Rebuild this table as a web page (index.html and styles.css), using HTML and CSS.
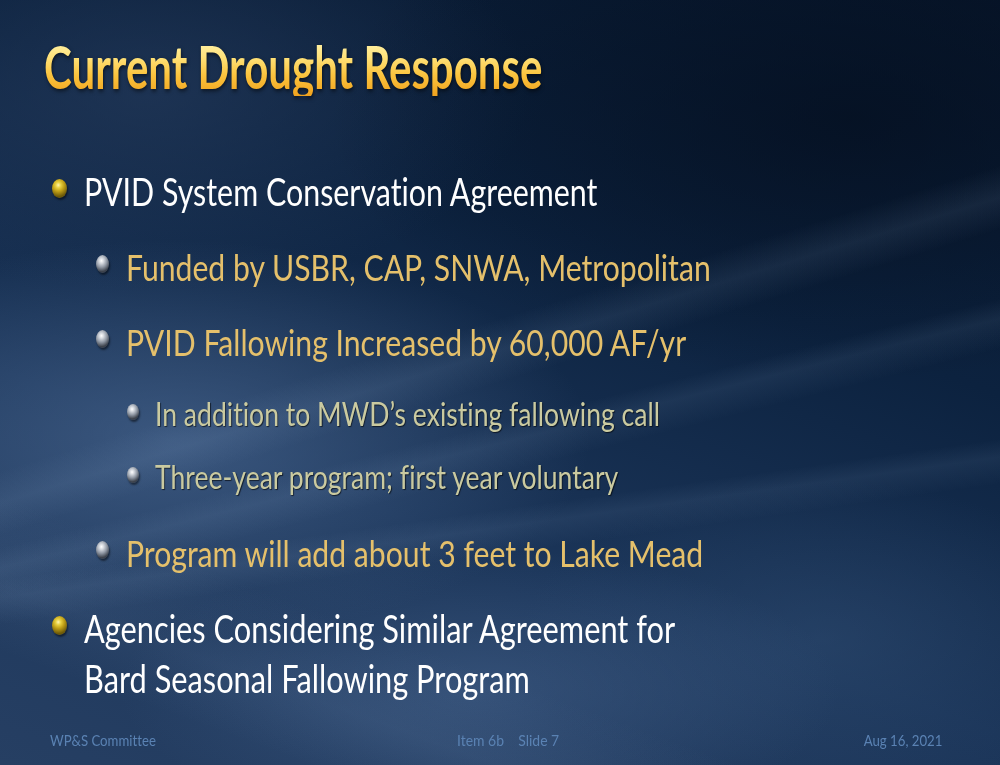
FILE: index.html
```html
<!DOCTYPE html>
<html lang="en">
<head>
<meta charset="utf-8">
<title>Current Drought Response</title>
<link rel="stylesheet" href="styles.css">
</head>
<body>
<div class="slide">
  <div class="bg-streaks"></div>
  <h1 class="title"><span class="t">Current Drought Response</span></h1>
  <ul class="list">
    <li class="item lvl1 g-a"><span class="dot gold"></span><span class="t">PVID System Conservation Agreement</span></li>
    <li class="item lvl2 g-b"><span class="dot silver"></span><span class="t">Funded by USBR, CAP, SNWA, Metropolitan</span></li>
    <li class="item lvl2 g-c"><span class="dot silver"></span><span class="t">PVID Fallowing Increased by 60,000 AF/yr</span></li>
    <li class="item lvl3 g-d"><span class="dot silver"></span><span class="t">In addition to MWD’s existing fallowing call</span></li>
    <li class="item lvl3 g-e"><span class="dot silver"></span><span class="t">Three-year program; first year voluntary</span></li>
    <li class="item lvl2 g-f"><span class="dot silver"></span><span class="t">Program will add about 3 feet to Lake Mead</span></li>
    <li class="item lvl1 wrap g-g"><span class="dot gold"></span><span class="t">Agencies Considering Similar Agreement for<br>Bard Seasonal Fallowing Program</span></li>
  </ul>
  <footer class="footer">
    <span class="f-left"><span class="t">WP&amp;S Committee</span></span>
    <span class="f-mid"><span class="t">Item 6b&nbsp;&nbsp;&nbsp;&nbsp;Slide 7</span></span>
    <span class="f-right"><span class="t">Aug 16, 2021</span></span>
  </footer>
</div>
</body>
</html>
```

FILE: styles.css
```css
html, body {
  margin: 0;
  padding: 0;
  background: #0c1e36;
}

.slide {
  position: relative;
  width: 1000px;
  height: 765px;
  overflow: hidden;
  display: flex;
  flex-direction: column;
  font-family: "Lato", "Open Sans", sans-serif;
  font-variant-ligatures: none;
  background:
    radial-gradient(ellipse 420px 200px at 170px 440px, rgba(80,110,152,0.6), rgba(80,110,152,0) 100%),
    radial-gradient(ellipse 360px 140px at 480px 690px, rgba(70,100,142,0.55), rgba(70,100,142,0) 100%),
    radial-gradient(ellipse 300px 160px at 820px 640px, rgba(50,80,118,0.45), rgba(50,80,118,0) 100%),
    radial-gradient(ellipse 520px 260px at 850px 120px, rgba(4,14,30,0.7), rgba(4,14,30,0) 100%),
    radial-gradient(ellipse 380px 200px at 150px 90px, rgba(40,62,96,0.6), rgba(40,62,96,0) 100%),
    linear-gradient(200deg, #07162b 0%, #0c223f 35%, #1b3559 65%, #263f63 100%);
}

.bg-streaks {
  position: absolute;
  inset: 0;
  pointer-events: none;
  background:
    linear-gradient(163deg, rgba(255,255,255,0) 44%, rgba(150,180,215,0.10) 47%, rgba(255,255,255,0) 50%),
    linear-gradient(166deg, rgba(255,255,255,0) 54%, rgba(150,180,215,0.09) 56%, rgba(255,255,255,0) 59%),
    linear-gradient(172deg, rgba(255,255,255,0) 64%, rgba(160,190,225,0.08) 66%, rgba(255,255,255,0) 69%),
    linear-gradient(20deg, rgba(255,255,255,0) 10%, rgba(140,170,210,0.08) 16%, rgba(255,255,255,0) 24%);
}

.t {
  display: inline-block;
  white-space: nowrap;
  transform-origin: 0 50%;
}

.title {
  position: relative;
  margin: 0;
  padding: 36px 0 0 44px;
  font-size: 60px;
  line-height: 60px;
  font-weight: 700;
}

.title .t {
  transform: scaleX(0.70);
  background: linear-gradient(180deg, #fff7b8 0%, #ffe27a 35%, #fbc43e 65%, #f0a21e 100%);
  -webkit-background-clip: text;
  background-clip: text;
  color: transparent;
  filter: drop-shadow(1px 2px 2px rgba(0,0,0,0.55));
}

.list {
  position: relative;
  list-style: none;
  margin: 0;
  padding: 0;
}

.item {
  display: flex;
  align-items: flex-start;
}

.lvl1 {
  padding-left: 52px;
  font-size: 38px;
  line-height: 40px;
  color: #ffffff;
}

.lvl1 .t { transform: scaleX(0.80); }

.lvl1.wrap {
  line-height: 50px;
}

.lvl1.wrap .t { transform: scaleX(0.81); }

.lvl2 {
  padding-left: 96px;
  font-size: 37px;
  line-height: 40px;
  color: #e5c06b;
}

.lvl2 .t { transform: scaleX(0.815); }

.lvl3 {
  padding-left: 127px;
  font-size: 32px;
  line-height: 36px;
  color: #cacaa0;
  text-shadow: 1px 1px 1px rgba(0,0,0,0.6);
}

.lvl3 .t { transform: scaleX(0.83); }

.g-a { margin-top: 75px; }
.g-b { margin-top: 36px; }
.g-c { margin-top: 35px; }
.g-d { margin-top: 34px; }
.g-e { margin-top: 27px; }
.g-f { margin-top: 38px; }
.g-g { margin-top: 30px; }

.dot {
  flex: none;
  border-radius: 50%;
  box-shadow: 1px 2px 2px rgba(0,0,0,0.5);
}

.lvl1 .dot {
  width: 15px;
  height: 19px;
  margin: 8px 17px 0 0;
}

.lvl1.wrap .dot {
  margin-top: 13px;
}

.lvl2 .dot {
  width: 13px;
  height: 18px;
  margin: 8px 17px 0 0;
}

.lvl3 .dot {
  width: 12px;
  height: 16px;
  margin: 8px 16px 0 0;
}

.gold {
  background: radial-gradient(ellipse 70% 60% at 42% 32%, #fff6b0 0%, #e8d040 25%, #c0a018 55%, #6e5a08 100%);
}

.silver {
  background: radial-gradient(ellipse 70% 60% at 42% 32%, #ffffff 0%, #d4d8de 25%, #9098a4 60%, #3c424c 100%);
}

.footer {
  position: relative;
  margin-top: 27px;
  display: grid;
  grid-template-columns: 1fr auto 1fr;
  padding: 0 58px 0 50px;
  font-size: 15px;
  line-height: 20px;
  color: #5a82b3;
}

.footer .t { transform: scaleX(0.88); }

.f-mid {
  padding-left: 32px;
}

.f-mid .t { transform: scaleX(0.93); }

.f-right {
  text-align: right;
}

.f-right .t {
  transform-origin: 100% 50%;
}
```
